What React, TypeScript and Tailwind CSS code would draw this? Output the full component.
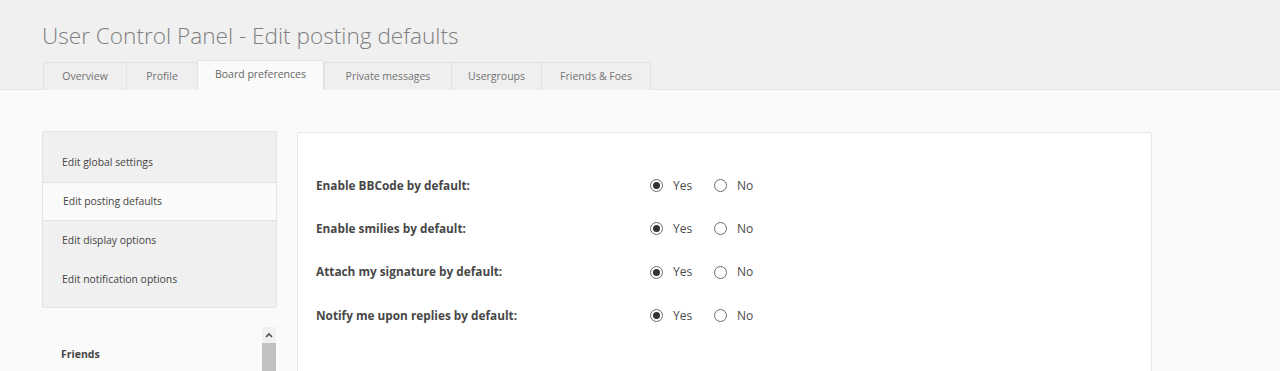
import React from "react";

const tabs = [
  { label: "Overview", w: "w-[83px]" },
  { label: "Profile", w: "w-[71px]" },
  { label: "Board preferences", w: "w-[127px]", active: true },
  { label: "Private messages", w: "w-[127px]" },
  { label: "Usergroups", w: "w-[90px]" },
  { label: "Friends & Foes", w: "w-[110px]" },
];

const sideItems = [
  { label: "Edit global settings" },
  { label: "Edit posting defaults", active: true },
  { label: "Edit display options" },
  { label: "Edit notification options" },
];

const rows = [
  "Enable BBCode by default:",
  "Enable smilies by default:",
  "Attach my signature by default:",
  "Notify me upon replies by default:",
];

function Radio({ checked }: { checked?: boolean }) {
  return (
    <span className="w-[13px] h-[13px] rounded-full border border-[#6b6b6b] bg-white flex items-center justify-center">
      {checked && <span className="w-[7px] h-[7px] rounded-full bg-[#333]" />}
    </span>
  );
}

export default function App() {
  return (
    <div
      className="w-[1280px] h-[371px] overflow-hidden bg-[#fafafa]"
      style={{ fontFamily: '"Open Sans", "Noto Sans", sans-serif' }}
    >
      <div className="h-[90px] bg-[#f0f0f0] border-b border-[#e6e6e6] px-[42px] flex flex-col">
        <h1 className="mt-[20px] text-[22.6px] leading-[32px] font-light text-[#7f7f7f]">
          User Control Panel - Edit posting defaults
        </h1>
        <div className="flex items-end mt-auto -mb-px ml-px">
          {tabs.map((t, i) => (
            <div
              key={t.label}
              className={`${t.w} flex items-center justify-center text-[10.5px] border-t border-l border-[#e2e2e2] ${
                i === tabs.length - 1 ? "border-r" : ""
              } ${
                t.active
                  ? "h-[30px] bg-[#fafafa] text-[#666] pb-[2px] rounded-t-[2px] border-r"
                  : "h-[28px] bg-[#efefef] text-[#737373] pt-[1px]"
              }`}
            >
              {t.label}
            </div>
          ))}
        </div>
      </div>

      <div className="flex pl-[42px] pt-[41px] gap-[20px]">
        <div className="w-[235px] shrink-0">
          <div className="bg-[#f0f0f0] border border-[#e4e4e4] rounded-[2px] pt-[11px] pb-[8px]">
            {sideItems.map((s) => (
              <div
                key={s.label}
                className={`h-[39px] flex items-center text-[10.4px] text-[#444] ${
                  s.active
                    ? "bg-[#fafafa] border-y border-[#e2e2e2] pl-[20px]"
                    : "pl-[19px]"
                }`}
              >
                {s.label}
              </div>
            ))}
          </div>
          <div className="flex mt-[19px]">
            <div className="flex-1 pl-[19px] pt-[20px] text-[10.5px] font-bold text-[#444]">
              Friends
            </div>
            <div className="w-[14px] mr-px flex flex-col">
              <div className="h-[16px] bg-[#f1f1f1] flex items-center justify-center">
                <svg width="8" height="6" viewBox="0 0 8 6">
                  <path d="M1 5 L4 2 L7 5" stroke="#505050" strokeWidth="1.6" fill="none" />
                </svg>
              </div>
              <div className="h-[40px] bg-[#c1c1c1]" />
            </div>
          </div>
        </div>

        <div className="w-[855px] h-[260px] bg-white border border-[#e8e8e8] rounded-[2px] mt-px pt-[31px] pl-[18px]">
          {rows.map((r) => (
            <div key={r} className="h-[43.3px] flex items-center">
              <div className="w-[334px] text-[11.8px] font-bold text-[#474747]">{r}</div>
              <div className="flex items-center text-[12px] text-[#4a4a4a]">
                <Radio checked />
                <span className="ml-[10px] w-[41px]">Yes</span>
                <Radio />
                <span className="ml-[10px]">No</span>
              </div>
            </div>
          ))}
        </div>
      </div>
    </div>
  );
}
